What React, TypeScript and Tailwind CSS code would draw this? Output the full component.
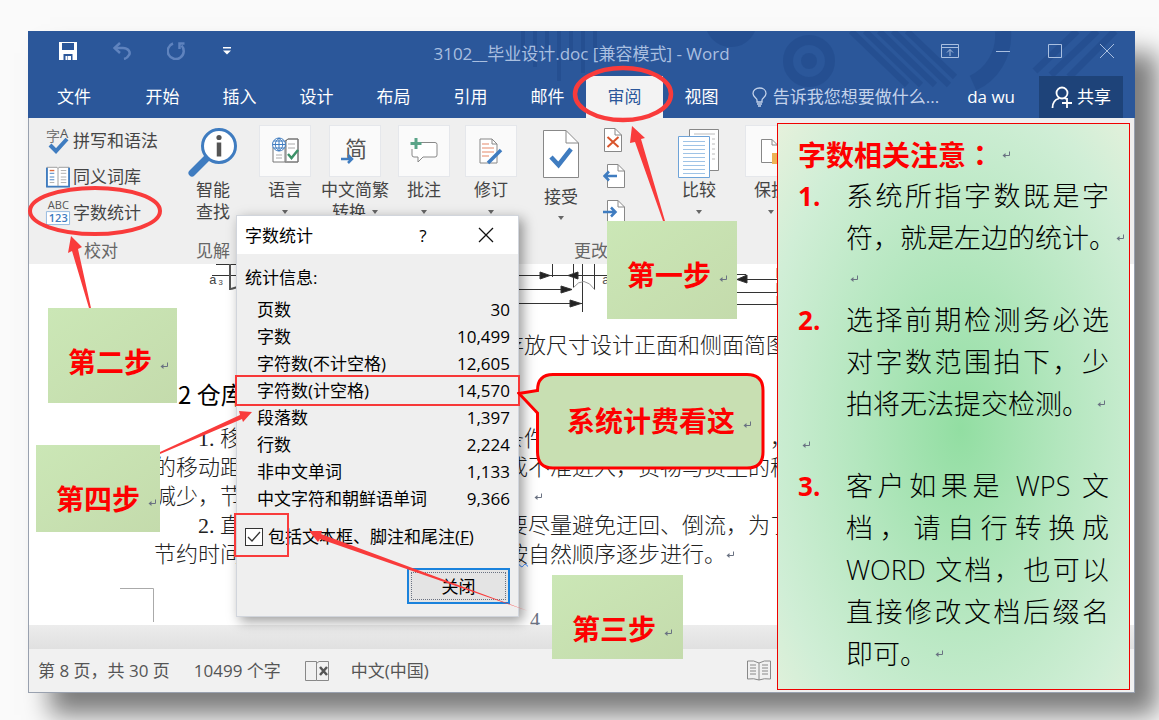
import React from "react";

const TABS = ["文件", "开始", "插入", "设计", "布局", "引用", "邮件", "审阅", "视图"];

const STATS = [
  { label: "页数", value: "30" },
  { label: "字数", value: "10,499" },
  { label: "字符数(不计空格)", value: "12,605" },
  { label: "字符数(计空格)", value: "14,570", marked: true },
  { label: "段落数", value: "1,397" },
  { label: "行数", value: "2,224" },
  { label: "非中文单词", value: "1,133" },
  { label: "中文字符和朝鲜语单词", value: "9,366" },
];

const NOTES = [
  { lines: ["系统所指字数既是字"], last: "符，就是左边的统计。" },
  { lines: ["选择前期检测务必选", "对字数范围拍下，少"], last: "拍将无法提交检测。" },
  {
    lines: ["客户如果是 WPS 文", "档，请自行转换成", "WORD 文档，也可以", "直接修改文档后缀名"],
    last: "即可。",
  },
];

const ReturnMark = ({ className = "" }: { className?: string }) => (
  <svg
    viewBox="0 0 8 8"
    className={`inline-block size-2 shrink-0 text-gray-500 ${className}`}
    fill="none"
    stroke="currentColor"
  >
    <path d="M7.5 0.5V4.5H2" />
    <path d="M3.5 2L0.5 4.5L3.5 7Z" fill="currentColor" stroke="none" />
  </svg>
);

const Caret = () => (
  <svg viewBox="0 0 6 4" className="h-1 w-1.5 shrink-0 fill-[#666]">
    <path d="M0 0H6L3 4Z" />
  </svg>
);

const TitleBar = () => (
  <div className="relative grid h-[45px] grid-cols-[1fr_auto_1fr] items-center text-[#a9bfe0]">
    <div className="flex items-center pb-1.5 pl-[31px]">
      <button aria-label="保存" className="mr-9">
        <svg viewBox="0 0 18 18" className="size-[18px]">
          <path d="M0 0H18V18H0Z" fill="#fff" />
          <path d="M3 1H15V8H3ZM4.500 12H13.500V18H4.500Z" fill="#2b579a" />
          <path d="M6.500 14H8.500V18H6.500Z" fill="#fff" />
          <path d="M9 14H12V18H9Z" fill="#fff" />
        </svg>
      </button>
      <button aria-label="撤消" className="mr-9">
        <svg viewBox="0 0 18 18" className="size-[18px]" fill="none" stroke="#5f83be" strokeWidth="2.500">
          <path d="M7 1L1.500 6L7 11" />
          <path d="M2 6H10C15 6 18 10 16 13C15 15 13 16.500 11 17" />
        </svg>
      </button>
      <button aria-label="恢复" className="mr-[38px]">
        <svg viewBox="0 0 18 18" className="size-[18px]" fill="none" stroke="#5f83be" strokeWidth="2.500">
          <path d="M6 1.500A8 8 0 1 0 14.500 3.500" />
          <path d="M17.500 1.500H12.500V7" />
        </svg>
      </button>
      <button aria-label="自定义快速访问工具栏">
        <svg viewBox="0 0 8 8" className="size-2" fill="#fff">
          <path d="M0 0H8V1.500H0ZM0 3.500H8L4 7.500Z" />
        </svg>
      </button>
    </div>
    <h1 className="text-[17px] leading-6 whitespace-pre">3102__毕业设计.doc [兼容模式] - Word</h1>
    <div className="flex items-center justify-end gap-9 pr-5 pb-1.5">
      <button aria-label="功能区显示选项">
        <svg viewBox="0 0 18 16" className="h-4 w-[18px]" fill="none" stroke="currentColor">
          <path d="M0.500 1.500H17.500V14.500H0.500ZM0.500 4.500H17.500M9 13V6.500M6 9.500L9 6.500L12 9.500" />
        </svg>
      </button>
      <button aria-label="最小化">
        <svg viewBox="0 0 16 16" className="size-4" stroke="currentColor">
          <path d="M1 8.500H15" />
        </svg>
      </button>
      <button aria-label="最大化">
        <svg viewBox="0 0 16 16" className="size-4" fill="none" stroke="currentColor">
          <path d="M1.500 1.500H14.500V14.500H1.500Z" />
        </svg>
      </button>
      <button aria-label="关闭窗口">
        <svg viewBox="0 0 16 16" className="size-4" fill="none" stroke="currentColor">
          <path d="M1 1L15 15M15 1L1 15" />
        </svg>
      </button>
    </div>
  </div>
);

const TabBar = () => (
  <div className="relative flex h-[42px] items-stretch text-[17px] leading-6 text-white">
    <nav className="flex">
      {TABS.map((tab) => (
        <button
          key={tab}
          className={`${tab === "文件" ? "w-24 pr-1" : "w-[77px]"} ${
            tab === "审阅" ? "bg-[#f3f3f3] text-[#2b579a]" : ""
          }`}
        >
          {tab}
        </button>
      ))}
    </nav>
    <button className="ml-auto flex items-center gap-1.5 text-[#c3d2ea]">
      <svg viewBox="0 0 15 20" className="h-5 w-[15px]" fill="none" stroke="currentColor" strokeWidth="1.300">
        <path d="M5 15V13C5 11 1 10 1 6.500C1 3 4 1 7.500 1C11 1 14 3 14 6.500C14 10 10 11 10 13V15Z" />
        <path d="M5 17H10M6 19H9" />
      </svg>
      告诉我您想要做什么...
    </button>
    <button className="ml-7">da wu</button>
    <button className="mr-3 ml-6 flex w-[84px] items-center justify-center gap-1 bg-[#1e4379]">
      <svg viewBox="0 0 22 23" className="h-[23px] w-[22px]" fill="none" stroke="#fff" strokeWidth="1.800">
        <circle cx="11" cy="7" r="5.500" />
        <path d="M1.500 22C1.500 17 4 13.500 8 12.500M16 12V22M11 17H21M13 11.500L15 13" />
      </svg>
      共享
    </button>
  </div>
);

// faint pattern printed on the right half of the header
const HeaderPattern = () => (
  <svg
    className="absolute top-0 right-0 h-full w-[640px] opacity-70"
    viewBox="0 0 640 87"
    fill="none"
    stroke="#234d8e"
  >
    <circle cx="314" cy="30" r="21" strokeWidth="10" />
    <circle cx="314" cy="30" r="8" fill="#234d8e" stroke="none" />
    <path d="M28 0V24M40 0V36M52 0V18M64 0V50M76 0V30M88 0V42M100 0V22" strokeWidth="4" />
    <path d="M212 0A26 26 0 0 0 260 0Z" fill="#234d8e" stroke="none" />
    <path d="M356 0L412 54M370 0L426 54M384 0L440 54M398 0L454 54M412 0L460 46" strokeWidth="6" />
    <path d="M508 0C510 24 496 44 478 52" strokeWidth="16" />
    <path d="M540 40L582 0M556 44L602 0M574 46L620 0" strokeWidth="7" />
  </svg>
);

const BigButton = ({
  label,
  second,
  icon,
  className,
}: {
  label: string;
  second?: string;
  icon: React.ReactNode;
  className: string;
}) => (
  <button className={`flex shrink-0 flex-col items-center whitespace-nowrap ${className}`}>
    <span className="flex size-[52px] shrink-0 items-center justify-center border border-gray-200 bg-[#fafafa]">
      {icon}
    </span>
    <span className="mt-0.5 leading-[22px]">{label}</span>
    <span className="flex h-[22px] items-center gap-1.5 leading-[22px]">
      {second}
      <Caret />
    </span>
  </button>
);

const Ribbon = () => (
  <div className="flex h-[146px] shrink-0 overflow-hidden bg-[#efefef] pt-[7px] pl-[17px] text-[17px] text-[#444]">
    <section className="flex w-[110px] shrink-0 flex-col whitespace-nowrap">
      <button className="flex h-8 items-center gap-[3px] leading-6">
        <svg viewBox="0 0 24 28" className="h-7 w-6 shrink-0 overflow-visible" fill="none">
          <text x="0" y="14" fontSize="14" fill="#777" fontFamily="Noto Sans CJK SC">
            字
          </text>
          <text x="14" y="11" fontSize="13" fill="#555" fontFamily="Open Sans">
            A
          </text>
          <path d="M4 18L10 24L21 12" stroke="#3f7cc0" strokeWidth="4" />
        </svg>
        拼写和语法
      </button>
      <button className="mt-1 flex h-8 items-center gap-[3px] leading-6">
        <svg viewBox="0 0 26 24" className="h-6 w-6 shrink-0" fill="none">
          <path d="M1 1.500H12L13 3L14 1.500H25V22.500H1Z" fill="#fff" stroke="#999" />
          <path d="M1 2V22.500H25V2" stroke="#3f7cc0" strokeWidth="2" />
          <path d="M13 3V22" stroke="#999" />
          <path d="M4 5H9" stroke="#e0693c" strokeWidth="1.500" />
          <path d="M4 8H9M4 12H9M4 15H9" stroke="#3f7cc0" />
          <path d="M16 5H22M16 8H22M16 12H22M16 15H22M4 18H9M16 18H22" stroke="#aaa" />
        </svg>
        同义词库
      </button>
      <button className="mt-1 flex h-8 items-center gap-[3px] leading-6">
        <svg viewBox="0 0 26 26" className="h-[26px] w-6 shrink-0 overflow-visible">
          <text x="2" y="9" fontSize="12" fill="#555" fontFamily="Open Sans">
            ABC
          </text>
          <path d="M0.500 11.500H25.500V25.500H0.500Z" fill="#fff" stroke="#8fb6de" />
          <text x="3" y="23" fontSize="12" fontWeight="600" fill="#3f7cc0" fontFamily="Open Sans">
            123
          </text>
        </svg>
        字数统计
      </button>
      <p className="mt-auto mb-0.5 text-center leading-[22px] text-[#666]">校对</p>
    </section>

    <section className="flex w-[98px] shrink-0 flex-col items-center pl-4">
      <button className="flex flex-col items-center">
        <svg viewBox="0 0 50 52" className="h-[54px] w-[50px]" fill="none">
          <path d="M4 47L20 31" stroke="#3f7cc0" strokeWidth="7" strokeLinecap="round" />
          <circle cx="31" cy="20" r="16.500" fill="#fff" stroke="#3f7cc0" strokeWidth="3" />
          <circle cx="31" cy="11.500" r="2.600" fill="#555" />
          <path d="M31 16.500V30.500" stroke="#555" strokeWidth="4.500" />
        </svg>
        <span className="w-9 leading-[22px]">智能查找</span>
      </button>
      <p className="mt-auto mb-0.5 leading-[22px] text-[#666]">见解</p>
    </section>

    <BigButton
      label="语言"
      className="w-[62px]"
      icon={
        <svg viewBox="0 0 28 28" className="size-7" fill="none">
          <path d="M2 10V25H27V2H17L15 4V24" fill="#fff" stroke="#777" />
          <path d="M14 25V4L17 2H27V25Z" stroke="#777" />
          <path d="M17 7H24M17 11H24M5 18H11M5 21H11" stroke="#aaa" />
          <circle cx="8" cy="7.500" r="6.500" fill="#fff" stroke="#3f7cc0" />
          <path d="M8 1V14M1.500 7.500H14.500M3 4H13M3 11H13M8 1C3 5 3 10 8 14C13 10 13 5 8 1" stroke="#3f7cc0" />
          <path d="M17 17L20.500 21L27 13" stroke="#3c9168" strokeWidth="2.500" />
        </svg>
      }
    />
    <BigButton
      label="中文简繁"
      second="转换"
      className="w-[78px]"
      icon={
        <svg viewBox="0 0 28 28" className="size-7 overflow-visible" fill="none">
          <text x="4" y="20" fontSize="22" fill="#555" fontFamily="Noto Sans CJK SC">
            简
          </text>
          <path d="M0 22H10M7 18L11 22L7 26" stroke="#3f7cc0" strokeWidth="2.500" />
        </svg>
      }
    />
    <BigButton
      label="批注"
      className="w-[60px]"
      icon={
        <svg viewBox="0 0 28 28" className="size-7" fill="none">
          <path d="M8 5.500H25Q27 5.500 27 7.500V18Q27 20 25 20H13L8 25V20H4Q2 20 2 18V12" fill="#fff" stroke="#888" />
          <path d="M6 1V12M0.500 6.500H11.500" stroke="#5aa488" strokeWidth="3" />
        </svg>
      }
    />
    <BigButton
      label="修订"
      className="w-[74px]"
      icon={
        <svg viewBox="0 0 24 28" className="h-7 w-6" fill="none">
          <path d="M1 2H13L18 7V26H1Z" fill="#fff" stroke="#888" />
          <path d="M13 2V7H18" stroke="#888" />
          <path d="M3 7H10M3 11H15M3 15H15M3 19H10" stroke="#e58a6a" strokeWidth="1.200" />
          <path d="M9 26L22 13" stroke="#3f7cc0" strokeWidth="3.500" />
        </svg>
      }
    />

    <section className="flex w-[126px] shrink-0 flex-col">
      <div className="flex">
        <button className="flex w-[66px] flex-col items-center pt-[5px]">
          <svg viewBox="0 0 36 48" className="h-12 w-9" fill="none">
            <path d="M0.500 0.500H23L35.500 13V47.500H0.500Z" fill="#fff" stroke="#888" />
            <path d="M23 0.500V13H35.500" stroke="#888" />
            <path d="M8 27L15.500 35L28 19" stroke="#3f7cc0" strokeWidth="4.500" />
          </svg>
          <span className="mt-2 leading-[22px]">接受</span>
          <span className="flex h-5 items-center">
            <Caret />
          </span>
        </button>
        <div className="flex w-10 flex-col items-center gap-3 pt-[3px]">
          <button aria-label="拒绝">
            <svg viewBox="0 0 22 24" className="h-6 w-[22px]" fill="none">
              <path d="M1.500 0.500H12L18.500 7V23.500H1.500Z" fill="#fff" stroke="#888" />
              <path d="M12 0.500V7H18.500" stroke="#888" />
              <path d="M4.500 9L15.500 19M15.500 9L4.500 19" stroke="#d9542b" strokeWidth="2" />
            </svg>
          </button>
          <button aria-label="上一条">
            <svg viewBox="0 0 22 24" className="h-6 w-[22px]" fill="none">
              <path d="M4.500 0.500H15L21.500 7V23.500H4.500Z" fill="#fff" stroke="#888" />
              <path d="M15 0.500V7H21.500" stroke="#888" />
              <path d="M1 12H14M6 7.500L1.500 12L6 16.500" stroke="#3f7cc0" strokeWidth="2.500" />
            </svg>
          </button>
          <button aria-label="下一条">
            <svg viewBox="0 0 22 24" className="h-6 w-[22px]" fill="none">
              <path d="M4.500 0.500H15L21.500 7V23.500H4.500Z" fill="#fff" stroke="#888" />
              <path d="M15 0.500V7H21.500" stroke="#888" />
              <path d="M0 12H13M8 7.500L12.500 12L8 16.500" stroke="#3f7cc0" strokeWidth="2.500" />
            </svg>
          </button>
        </div>
      </div>
      <p className="mt-auto mb-0.5 text-center leading-[22px] text-[#666]">更改</p>
    </section>

    <button className="flex w-[90px] shrink-0 flex-col items-center">
      <svg viewBox="0 0 42 50" className="mt-1 h-[50px] w-[42px]" fill="none">
        <path d="M11.500 0.500H40.500V41.500H11.500Z" fill="#fff" stroke="#888" />
        <path d="M16 5H37M34 10H37M34 15H37M34 20H37M34 25H37M34 30H37" stroke="#bbb" />
        <path d="M0.500 7.500H31.500V48.500H0.500Z" fill="#fff" stroke="#6ea3d8" />
        <path
          d="M5 12.500H27M5 16.500H27M5 20.500H27M5 24.500H27M5 28.500H27M5 32.500H27M5 36.500H27M5 40.500H27M5 44.500H27"
          stroke="#9fc3e6"
        />
      </svg>
      <span className="leading-[22px]">比较</span>
      <span className="flex h-[22px] items-center">
        <Caret />
      </span>
    </button>
    <BigButton
      label="保护"
      className="w-[54px]"
      icon={
        <svg viewBox="0 0 24 26" className="h-[26px] w-6" fill="none">
          <path d="M2.500 1.500H13L18.500 7V24.500H2.500Z" fill="#fff" stroke="#888" />
          <path d="M13 1.500V7H18.500" stroke="#888" />
          <path d="M13 15H24V26H13Z" fill="#edb356" />
        </svg>
      }
    />
  </div>
);

const DocLine = ({ left, right, indent }: { left?: string; right?: React.ReactNode; indent?: boolean }) => (
  <div className="flex h-[29px] items-center whitespace-pre">
    <span className={`w-[352px] ${indent ? "pl-11" : ""}`}>{left}</span>
    <span className="flex items-center">{right}</span>
  </div>
);

const DocumentPage = () => (
  <div className="relative min-h-[361px] flex-1 overflow-hidden bg-white pl-[125px] font-['Liberation_Serif','Noto_Sans_CJK_SC',serif] text-[22px] font-light text-[#222]">
    <svg viewBox="0 0 630 50" className="h-[50px] w-[630px]" fill="none" stroke="#333">
      <path d="M62 0.500H90M58 11.500H90" />
      <path d="M76 0V26M77 25L90 21" stroke="#555" strokeWidth="2" />
      <text x="55" y="20" fontSize="13" fill="#444" stroke="none" fontFamily="Liberation Mono">
        a₃
      </text>
      <path d="M360 11.500H480M360 25.500H418M360 39.500H428M398.500 0V13M419.500 0V24M440.500 0V26M428.500 0V48" />
      <path d="M419 24Q430 10 441 26" stroke="#999" />
      <path d="M386 8L396 11.500L386 15ZM424 8L414 11.500L424 15ZM407 22L418 25.500L407 29ZM416 36L427 39.500L416 43Z" fill="#222" />
      <text x="448" y="20" fontSize="13" fill="#555" stroke="none" fontFamily="Liberation Mono">
        a
      </text>
      <path d="M580 10.500H592M580 15.500H625M580 28.500H625M580 40.500H625" />
      <path d="M593 11L583 15.500L593 19Z" fill="#222" />
      <path d="M623.500 4V14M623.500 19V28M623.500 32V40" stroke="#c4703a" strokeWidth="2" />
    </svg>
    <div className="mt-[17px]">
      <DocLine right={<span className="-ml-1">存放尺寸设计正面和侧面简图</span>} />
    </div>
    <h2 className="mt-[18px] pl-6 font-['Noto_Sans_CJK_SC',sans-serif] text-2xl leading-8 font-normal text-black">
      2 仓库
    </h2>
    <div className="mt-3.5">
      <DocLine indent left="1. 移" right={<><span className="-ml-1 w-[268px]">条件</span>，</>} />
      <DocLine left="的移动距" right="或不准进入，货物与货主的移" />
      <DocLine left="减少，节" right={<ReturnMark className="ml-7" />} />
      <DocLine indent left="2. 直" right="要尽量避免迂回、倒流，为了" />
      <DocLine
        left="节约时间"
        right={
          <>
            <span className="underline decoration-blue-500 decoration-wavy decoration-1">按</span>
            自然顺序逐步进行。
            <ReturnMark />
          </>
        }
      />
    </div>
    <div className="mt-[19px] flex h-[34px] items-start justify-between pr-[594px] text-xl leading-6 text-gray-500">
      <svg viewBox="0 0 34 34" className="-ml-[34px] h-[34px] w-[34px]" fill="none" stroke="#aaa">
        <path d="M0 0.500H33.500V34" />
      </svg>
      <span className="pt-5">4</span>
    </div>
  </div>
);

const StatusBar = () => (
  <footer className="flex h-[43px] shrink-0 items-center bg-[#f1f1f1] pl-[9px] text-[17px] leading-6 text-[#555]">
    <span>第 8 页，共 30 页</span>
    <span className="ml-6">10499 个字</span>
    <svg viewBox="0 0 24 20" className="ml-6 h-5 w-6" fill="none" stroke="#888">
      <path d="M0.500 0.500H11.500V19.500H0.500ZM11.500 2.500L14 0.500H23.500V19.500H11.500" />
      <path d="M15 6L22 14M22 6L15 14" stroke="#555" strokeWidth="2.500" />
    </svg>
    <span className="ml-[22px]">中文(中国)</span>
    <svg viewBox="0 0 24 21" className="mr-[363px] ml-auto h-[21px] w-6" fill="none" stroke="#888">
      <path d="M12 3Q7 0 0.500 1V19Q7 18 12 20Q17 18 23.500 19V1Q17 0 12 3V20" />
      <path d="M3 5H9M3 8H9M3 11H9M3 14H9M15 5H21M15 8H21M15 11H21M15 14H21" />
    </svg>
  </footer>
);

const CountDialog = () => (
  <div
    role="dialog"
    aria-label="字数统计"
    className="absolute top-[215px] left-[236px] w-[283px] border border-gray-300 bg-[#efefef] text-[17px] leading-[27px] text-black shadow-[4px_4px_12px_rgba(0,0,0,0.4)]"
  >
    <div className="flex h-[38px] items-center bg-white pr-6 pl-2">
      <span>字数统计</span>
      <button className="ml-auto w-4" aria-label="帮助">
        ?
      </button>
      <button className="ml-[47px]" aria-label="关闭对话框">
        <svg viewBox="0 0 16 16" className="size-4" stroke="#111" strokeWidth="1.300">
          <path d="M1 1L15 15M15 1L1 15" />
        </svg>
      </button>
    </div>
    <p className="px-2 pt-[10px] pb-[5px]">统计信息:</p>
    <table className="w-full border-collapse">
      <tbody>
        {STATS.map((row) => (
          <tr key={row.label} className={row.marked ? "outline-2 outline-[#f73838]" : ""}>
            <th scope="row" className="h-[27px] p-0 pl-5 text-left font-normal whitespace-nowrap">
              {row.label}
            </th>
            <td className="p-0 pr-2 text-right">{row.value}</td>
          </tr>
        ))}
      </tbody>
    </table>
    <label className="mt-[11px] flex items-center gap-[5px] pl-2">
      <span className="grid shrink-0 place-items-center">
        <input
          type="checkbox"
          defaultChecked
          className="peer col-start-1 row-start-1 size-[18px] appearance-none border border-[#333] bg-white"
        />
        <svg
          viewBox="0 0 14 12"
          className="pointer-events-none col-start-1 row-start-1 hidden h-3 w-3.5 peer-checked:block"
          fill="none"
          stroke="#333"
          strokeWidth="1.300"
        >
          <path d="M1 6L5 10L13 1" />
        </svg>
      </span>
      <span className="whitespace-nowrap">
        包括文本框、脚注和尾注(<u>F</u>)
      </span>
    </label>
    <div className="flex justify-end pt-[18px] pr-2 pb-3">
      <button className="h-9 w-[103px] border-2 border-[#1a82dc] bg-[#e4e4e4] p-0.5">
        <span className="flex h-full items-center justify-center border border-dotted border-gray-500">关闭</span>
      </button>
    </div>
  </div>
);

const StepTag = ({ label, className }: { label: string; className: string }) => (
  <div
    className={`absolute flex items-start gap-2 bg-linear-to-br from-[#cbe7b6] to-[#c4dbac] pt-[34px] pl-5 text-[28px] leading-10 font-bold whitespace-nowrap text-[#fe0000] ${className}`}
  >
    {label}
    <ReturnMark className="mt-5" />
  </div>
);

const Callout = () => (
  <div className="absolute top-[372px] left-[517px] flex h-[98px] w-[249px] items-center gap-2 pl-[50px] text-[28px] leading-10 font-bold whitespace-nowrap text-[#fe0000]">
    <svg viewBox="0 0 249 98" className="absolute inset-0 size-full" fill="#c8dfb2" stroke="#fe0000" strokeWidth="3">
      <path d="M36 2.500H230Q246 2.500 246 18.500V80Q246 96 230 96H36Q20.500 96 20.500 80V41L2 21.500L20.500 18.500Q20.500 2.500 36 2.500Z" />
    </svg>
    <span className="relative">系统计费看这</span>
    <ReturnMark className="relative mt-2" />
  </div>
);

const Marks = () => (
  <svg className="pointer-events-none absolute inset-0 size-full" fill="none" stroke="#f93b3b">
    <ellipse cx="95" cy="211" rx="65" ry="23" strokeWidth="4" />
    <ellipse cx="623" cy="94" rx="48" ry="26" strokeWidth="4.500" />
    <path d="M235 514H288V556H235Z" strokeWidth="2" />
    <g fill="#f93b3b" stroke="none">
      <path d="M632 126L645 138L641 139L665 221H663L635 142L630 143Z" />
      <path d="M71 236L82 247L78 249L91 308H89L72 251L68 253Z" />
      <path d="M252 412L243 422L242 419L160 454V452L240 415L239 411Z" />
      <path d="M309 531L322 531L321 534L528 611L320 539L318 542Z" />
    </g>
  </svg>
);

const NotesPanel = () => (
  <aside className="absolute top-[123px] right-[29px] bottom-[31px] w-[353px] border border-[#f00000] bg-[radial-gradient(ellipse_at_52%_54%,#92dea2_0%,#b2e6bd_38%,#d0eed6_78%,#e6f1dc_100%)] px-5 pt-[10px] text-[27px] leading-[42px] font-light text-black">
    <h2 className="flex items-center gap-2 text-[28px] leading-10 font-bold text-[#fe0000]">
      <span>
        字数相关注意<span className="font-['Noto_Sans_CJK_TC',sans-serif]">：</span>
      </span>
      <ReturnMark />
    </h2>
    <ol>
      {NOTES.map((note, i) => (
        <li key={note.last} className="grid grid-cols-[48px_minmax(0,1fr)]">
          <span className="text-[26px] font-bold text-[#fe0000]">{i + 1}.</span>
          <div>
            {note.lines.map((line) => (
              <p key={line} className="[text-align-last:justify]">
                {line}
              </p>
            ))}
            <p className="flex items-center whitespace-nowrap">
              {note.last}
              <ReturnMark className={i === 0 ? "" : "ml-2"} />
            </p>
          </div>
          {i < 2 && (
            <div className={`col-span-2 flex h-10 items-center ${i === 0 ? "pl-[52px]" : "pl-1"}`}>
              <ReturnMark />
            </div>
          )}
        </li>
      ))}
    </ol>
  </aside>
);

const App = () => {
  return (
    <main className="relative flex min-h-screen w-full flex-col overflow-hidden bg-[#fafafa] pt-[31px] pr-6 pb-7 pl-7 font-['Open_Sans','Noto_Sans_CJK_SC',sans-serif]">
      <div className="flex flex-1 flex-col border border-gray-400 shadow-[22px_22px_24px_rgba(0,0,0,0.5)]">
        <header className="relative -mx-px -mt-px overflow-hidden bg-[#2b579a]">
          <HeaderPattern />
          <TitleBar />
          <TabBar />
        </header>
        <Ribbon />
        <DocumentPage />
        <div className="h-6 shrink-0 bg-linear-to-b from-[#ececec] to-[#e0e0e0]" />
        <StatusBar />
      </div>
      <NotesPanel />
      <CountDialog />
      <StepTag label="第一步" className="top-[221px] left-[607px] h-[98px] w-[130px]" />
      <StepTag label="第二步" className="top-[308px] left-[48px] h-[95px] w-[129px]" />
      <StepTag label="第三步" className="top-[575px] left-[552px] h-[84px] w-[131px]" />
      <StepTag label="第四步" className="top-[445px] left-[36px] h-[87px] w-[124px]" />
      <Callout />
      <Marks />
    </main>
  );
};

export default App;
